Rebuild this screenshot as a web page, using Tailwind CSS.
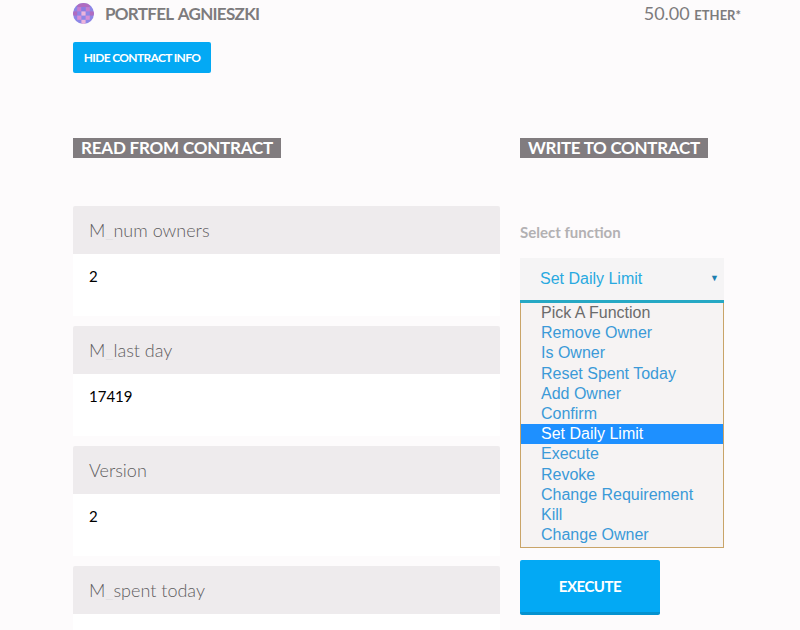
<!DOCTYPE html>
<html lang="en">
<head>
  <meta charset="UTF-8"/>
  <title>Portfel Agnieszki</title>
  <script src="https://cdn.jsdelivr.net/npm/@tailwindcss/browser@4"></script>
</head>
<body class="bg-[#fdfbfc] font-['Lato',sans-serif] h-[630px] overflow-hidden">
  <div class="w-[668px] ml-[73px]">

    <!-- header -->
    <div class="flex justify-between h-[26px] items-center pt-[1px]">
      <div class="flex items-center">
        <svg width="21" height="21" viewBox="0 0 5 5" class="rounded-full">
          <rect width="5" height="5" fill="#8d86e6"/>
          <rect x="1" y="0" width="3" height="1" fill="#b06cc0"/>
          <rect x="1" y="1" width="1" height="1" fill="#c77ed0"/>
          <rect x="3" y="1" width="1" height="1" fill="#c77ed0"/>
          <rect x="2" y="1" width="1" height="1" fill="#8d7ce0"/>
          <rect x="0" y="2" width="1" height="1" fill="#b06cc0"/>
          <rect x="2" y="2" width="1" height="1" fill="#ecb4dc"/>
          <rect x="4" y="2" width="1" height="1" fill="#b06cc0"/>
          <rect x="1" y="3" width="1" height="1" fill="#d590d8"/>
          <rect x="3" y="3" width="1" height="1" fill="#d590d8"/>
          <rect x="2" y="4" width="1" height="1" fill="#ecb4dc"/>
        </svg>
        <span class="ml-[11px] text-[17px] font-bold tracking-[-0.7px] [word-spacing:2px] text-[#7d7b7d]">PORTFEL AGNIESZKI</span>
      </div>
      <div class="text-[#7d7b7d] text-[18px]">50.00 <span class="text-[13px] font-bold">ETHER*</span></div>
    </div>

    <button class="block mt-[16px] w-[138px] h-[31px] rounded-[2px] bg-[#03a9f4] text-white text-[12px] font-bold tracking-[-0.65px]">HIDE CONTRACT INFO</button>

    <div class="flex mt-[65px]">

      <!-- read column -->
      <div class="w-[427px]">
        <h2 class="w-fit bg-[#817c7f] text-white text-[17px] font-bold tracking-[-0.2px] leading-[20px] px-[8px]">READ FROM CONTRACT</h2>
        <div class="mt-[48px] flex flex-col gap-[10px]">
          <div>
            <div class="h-[48px] bg-[#eeebed] rounded-t-[2px] pl-[16px] flex items-center text-[18px] font-light text-[#5f5d5f] whitespace-pre">M<span class="text-[#dddbdd]">_</span>num owners</div>
            <div class="h-[62px] bg-white pl-[16px] pt-[11px] text-[15px] text-black">2</div>
          </div>
          <div>
            <div class="h-[48px] bg-[#eeebed] rounded-t-[2px] pl-[16px] flex items-center text-[18px] font-light text-[#5f5d5f] whitespace-pre">M<span class="text-[#dddbdd]">_</span>last day</div>
            <div class="h-[62px] bg-white pl-[16px] pt-[11px] text-[15px] text-black">17419</div>
          </div>
          <div>
            <div class="h-[48px] bg-[#eeebed] rounded-t-[2px] pl-[16px] flex items-center text-[18px] font-light text-[#5f5d5f]">Version</div>
            <div class="h-[62px] bg-white pl-[16px] pt-[11px] text-[15px] text-black">2</div>
          </div>
          <div>
            <div class="h-[48px] bg-[#eeebed] rounded-t-[2px] pl-[16px] flex items-center text-[18px] font-light text-[#5f5d5f] whitespace-pre">M<span class="text-[#dddbdd]">_</span>spent today</div>
            <div class="h-[16px] bg-white"></div>
          </div>
        </div>
      </div>

      <!-- write column -->
      <div class="ml-[20px] w-[204px]">
        <h2 class="w-fit bg-[#817c7f] text-white text-[17px] font-bold tracking-[-0.3px] leading-[20px] px-[8px] whitespace-nowrap">WRITE TO CONTRACT</h2>
        <div class="mt-[63px] text-[15px] leading-[22px] font-bold text-[#b3b1b3]">Select function</div>
        <div class="mt-[15px] h-[45px] bg-[#f5f4f5] border-b-[3px] border-[#26a8c4] flex items-center justify-between pl-[20px] pr-[5px] font-['Liberation_Sans',sans-serif] text-[16px] text-[#29a9e0]">
          <span>Set Daily Limit</span>
          <span class="text-[9px] text-[#1c7fb0]">▼</span>
        </div>
        <div class="border border-t-0 border-[#c9a468] bg-[#f6f3f3] font-['Liberation_Sans',sans-serif] text-[16px] leading-[20.2px] text-[#3b9ad8] h-[245px]">
          <div class="pl-[20px] text-[#6b6b6b]">Pick A Function</div>
          <div class="pl-[20px]">Remove Owner</div>
          <div class="pl-[20px]">Is Owner</div>
          <div class="pl-[20px]">Reset Spent Today</div>
          <div class="pl-[20px]">Add Owner</div>
          <div class="pl-[20px]">Confirm</div>
          <div class="pl-[20px] bg-[#1e90ff] text-white">Set Daily Limit</div>
          <div class="pl-[20px]">Execute</div>
          <div class="pl-[20px]">Revoke</div>
          <div class="pl-[20px]">Change Requirement</div>
          <div class="pl-[20px]">Kill</div>
          <div class="pl-[20px]">Change Owner</div>
        </div>
        <button class="block mt-[12px] w-[140px] h-[55px] rounded-[2px] bg-[#03a9f4] border-b-[3px] border-[#0592cf] text-white text-[15px] font-bold tracking-[-0.5px]">EXECUTE</button>
      </div>

    </div>
  </div>
</body>
</html>
